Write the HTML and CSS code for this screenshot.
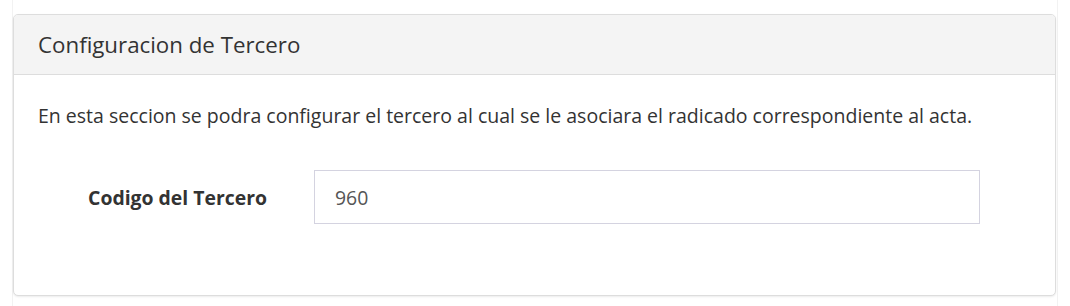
FILE: index.html
```html
<!DOCTYPE html>
<html lang="es">
<head>
<meta charset="utf-8">
<title>Configuracion de Tercero</title>
<link rel="stylesheet" href="styles.css">
</head>
<body>
<div class="wrap">
  <section class="card">
    <header class="card-head">
      <h3 class="card-title">Configuracion de Tercero</h3>
    </header>
    <div class="card-body">
      <p class="intro">En esta seccion se podra configurar el tercero al cual se le asociara el radicado correspondiente al acta.</p>
      <div class="field">
        <label class="field-label" for="codigo">Codigo del Tercero</label>
        <input class="field-input" id="codigo" type="text" value="960">
      </div>
    </div>
  </section>
</div>
</body>
</html>
```
FILE: styles.css
```css
html, body {
  margin: 0;
  padding: 0;
  background: #ffffff;
}
body {
  font-family: "Open Sans", Lato, sans-serif;
  color: #333333;
}
.wrap {
  box-sizing: border-box;
  margin-left: 12px;
  width: 1046px;
  height: 306px;
  border-left: 1px solid #f2f2f2;
  border-right: 1px solid #f2f2f2;
  padding: 14px 1px 0 0;
}
.card {
  border: 1px solid #dddddd;
  border-radius: 5px;
  box-shadow: 0 1px 2px rgba(0, 0, 0, 0.08);
  background: #ffffff;
  overflow: hidden;
}
.card-head {
  box-sizing: border-box;
  height: 60px;
  background: #f4f4f4;
  border-bottom: 1px solid #dddddd;
  display: flex;
  align-items: center;
  padding: 0 24px;
}
.card-title {
  margin: 0;
  font-weight: 400;
  font-size: 22.3px;
  line-height: 28px;
  color: #333333;
}
.card-body {
  padding: 28px 24px 71px;
}
.intro {
  margin: 0;
  font-size: 19.5px;
  line-height: 26px;
  color: #333333;
}
.field {
  display: flex;
  align-items: center;
  margin-top: 41px;
}
.field-label {
  box-sizing: border-box;
  width: 276px;
  padding-right: 47px;
  text-align: right;
  font-weight: 700;
  font-size: 19.4px;
  color: #333333;
}
.field-input {
  box-sizing: border-box;
  width: 666px;
  height: 54px;
  border: 1px solid #d4d3e0;
  border-radius: 0;
  padding: 0 20px;
  font-family: inherit;
  font-size: 19.4px;
  color: #555555;
  background: #ffffff;
  outline: none;
}
```
